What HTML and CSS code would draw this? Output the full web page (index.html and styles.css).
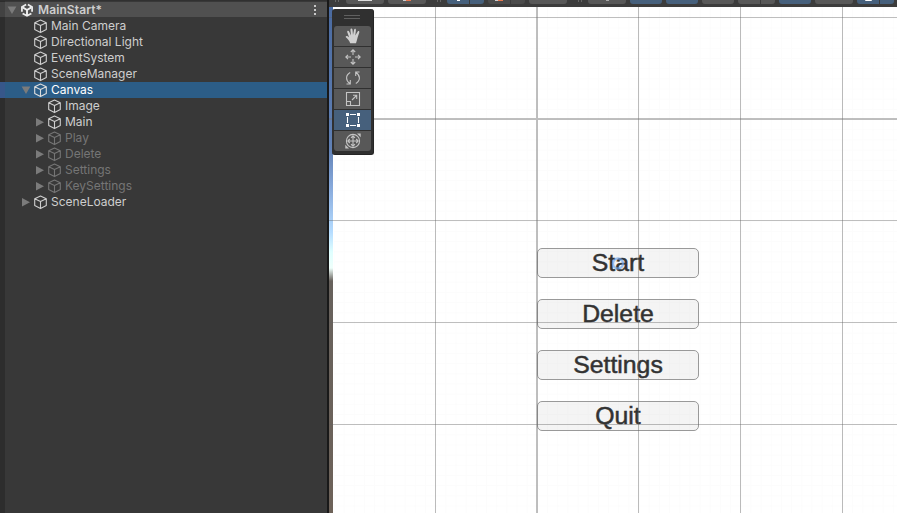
FILE: index.html
```
<!DOCTYPE html>
<html lang="en">
<head>
<meta charset="utf-8">
<title>Editor</title>
<link rel="stylesheet" href="styles.css">
</head>
<body>
<svg class="defs" width="0" height="0">
  <symbol id="cube" viewBox="0 0 16 16"><path d="M7.5 2 13.3 4.7V11.6L7.5 14.6 1.7 11.6V4.7ZM1.7 4.7 7.5 7.6 13.3 4.7M7.5 7.6V14.6" fill="none" stroke="currentColor" stroke-width="1.1" stroke-linejoin="round"/></symbol>
  <symbol id="down" viewBox="0 0 10 16"><path d="M.6 4.5H9.4L5 12Z" fill="currentColor"/></symbol>
  <symbol id="right" viewBox="0 0 10 16"><path d="M1 4V12.4L9 8.2Z" fill="currentColor"/></symbol>
</svg>
<div class="editor">
  <section class="hierarchy">
    <div class="row scene"><svg class="arrow"><use href="#down"/></svg><svg class="logo" viewBox="0 0 14 16"><path d="M6 1.6 1.2 4.5V10M8 1.6 12.8 4.5V10M2 12 7 14.7 12 12" fill="none" stroke="#eee" stroke-width="2"/><path d="M7 8V14M7 8 2 5M7 8 12 5" stroke="#eee" stroke-width="2.2"/></svg><b>MainStart*</b><span class="more"><i></i><i></i><i></i></span></div>
    <div class="row d1"><span class="arrow"></span><svg class="cube"><use href="#cube"/></svg>Main Camera</div>
    <div class="row d1"><span class="arrow"></span><svg class="cube"><use href="#cube"/></svg>Directional Light</div>
    <div class="row d1"><span class="arrow"></span><svg class="cube"><use href="#cube"/></svg>EventSystem</div>
    <div class="row d1"><span class="arrow"></span><svg class="cube"><use href="#cube"/></svg>SceneManager</div>
    <div class="row d1 selected"><svg class="arrow"><use href="#down"/></svg><svg class="cube"><use href="#cube"/></svg>Canvas</div>
    <div class="row d2"><span class="arrow"></span><svg class="cube"><use href="#cube"/></svg>Image</div>
    <div class="row d2"><svg class="arrow"><use href="#right"/></svg><svg class="cube"><use href="#cube"/></svg>Main</div>
    <div class="row d2 off"><svg class="arrow"><use href="#right"/></svg><svg class="cube"><use href="#cube"/></svg>Play</div>
    <div class="row d2 off"><svg class="arrow"><use href="#right"/></svg><svg class="cube"><use href="#cube"/></svg>Delete</div>
    <div class="row d2 off"><svg class="arrow"><use href="#right"/></svg><svg class="cube"><use href="#cube"/></svg>Settings</div>
    <div class="row d2 off"><svg class="arrow"><use href="#right"/></svg><svg class="cube"><use href="#cube"/></svg>KeySettings</div>
    <div class="row d1"><svg class="arrow"><use href="#right"/></svg><svg class="cube"><use href="#cube"/></svg>SceneLoader</div>
  </section>
  <section class="view">
    <div class="bar">
      <span class="grip"></span>
      <span class="chip"><em class="pale"></em></span><span class="chip"><em class="mark"></em></span>
      <span class="grip wide"></span>
      <span class="pair"><span class="chip on w22"><em class="dot"></em></span><span class="chip on w14"></span></span>
      <span class="pair"><span class="chip dim w22"><em class="mark"></em></span><span class="chip dim w14"></span></span>
      <span class="chip"></span>
      <span class="grip wide"></span>
      <span class="chip"><em class="dot grey"></em></span>
      <span class="chip on w32"></span><span class="chip on w32"></span><span class="chip w32"></span>
      <span class="pair"><span class="chip w22"></span><span class="chip w14"></span></span>
      <span class="chip on w32"></span><span class="chip"></span>
      <span class="pair"><span class="chip on w22"><em class="lens"></em></span><span class="chip on w14"></span></span>
    </div>
    <div class="stage">
      <div class="sky"></div>
      <div class="menu">
        <div class="button">Start</div>
        <div class="button">Delete</div>
        <div class="button">Settings</div>
        <div class="button">Quit</div>
      </div>
      <svg class="grid" viewBox="329 7 568 506" width="568" height="506">
        <defs><pattern id="minor" x="333.5" y="7.2" width="10.17" height="10.17" patternUnits="userSpaceOnUse"><path d="M0 .5H10.17M.5 0V10.17" stroke="#777" stroke-opacity=".025"/></pattern></defs>
        <path d="M334 7H897V513H334Z" fill="url(#minor)"/>
        <path d="M329 17.5H897M329 220.5H897M329 322.5H897M329 424.5H897" stroke="#606060" stroke-opacity=".4"/>
        <path d="M435.5 7V513M638.5 7V513M740.5 7V513M842.5 7V513" stroke="#606060" stroke-opacity=".42"/>
        <path d="M537 7V513M329 119H897" stroke="#707070" stroke-opacity=".45" stroke-width="2"/>
        <circle cx="618" cy="263.5" r="5" fill="none" stroke="#6ca3ee" stroke-opacity=".65" stroke-width="2.4"/>
      </svg>
      <div class="tools">
        <span class="handle"></span>
        <div class="tool hand"><svg viewBox="0 0 16 16"><path d="M5.2 15.2C4.4 12.8 2.9 11 .6 8.9 1 7.6 2.5 7.9 4.2 9.4L2.2 3.9C2.1 2.5 3.6 2.3 4.1 3.5L6 7.5 5.4 1.7C5.5.2 7.2.2 7.5 1.7L8 7 9.1 1.7C9.5.3 11.1.7 10.9 2.2L10.3 7.6 12.7 3.6C13.5 2.5 14.8 3.4 14.2 4.7L12.6 9.5C12 12 11.5 13.5 11 15.2Z"/></svg></div>
        <div class="tool"><svg viewBox="0 0 16 16"><path d="M8 1V6M8 10V15M1 8H6M10 8H15M5.8 3 8 .8 10.2 3M5.8 13 8 15.2 10.2 13M3 5.8.8 8 3 10.2M13 5.8 15.2 8 13 10.2"/></svg></div>
        <div class="tool"><svg viewBox="0 0 16 16"><path d="M5 13.5C.4 10.5.4 5.2 5.2 2.5M11 2.5C15.6 5.5 15.6 10.8 10.8 13.5M1.5 14H5.3V10M14.5 2H10.7V6"/></svg></div>
        <div class="tool"><svg viewBox="0 0 16 16"><path d="M1.5 1.5H14.5V14.5H1.5ZM1.5 10.5H5.5V14.5M7 9 11.5 4.5M8 4.3H11.7V8"/></svg></div>
        <div class="tool active"><svg viewBox="0 0 16 16"><path d="M5 2.5H11M5 13.5H11M2.5 5V11M13.5 5V11"/><path d="M1 1H4V4H1ZM12 1H15V4H12ZM1 12H4V15H1ZM12 12H15V15H12Z" fill="#fff" stroke="none"/></svg></div>
        <div class="tool"><svg viewBox="0 0 16 16"><circle cx="8" cy="8" r="6.6"/><path d="M8 3V13M3 8H13M6 4.8 8 2.8 10 4.8M6 11.2 8 13.2 10 11.2M4.8 6 2.8 8 4.8 10M11.2 6 13.2 8 11.2 10"/><path d="M12 .5H15.7V4.2ZM.3 11.8V15.5H4Z" fill="#c4c4c4" stroke="none"/></svg></div>
      </div>
    </div>
  </section>
</div>
</body>
</html>
```
FILE: styles.css
```
* { box-sizing: border-box; }
body { margin: 0; overflow: hidden; }
.defs { position: absolute; }
.editor { display: flex; width: 897px; height: 513px; background: #191919; font: 12px/16px Inter, sans-serif; }
.hierarchy { width: 327px; margin-right: 2px; padding-top: 2px; background: linear-gradient(#303030, #303030) 0 0 / 100% 1px no-repeat, linear-gradient(90deg, #2d2d2d 5px, #383838 5px); color: #cecece; }
.row { display: flex; align-items: center; height: 16px; white-space: nowrap; }
.row svg { display: block; flex: none; }
.scene { background: linear-gradient(90deg, #424242 5px, #505050 5px); padding-left: 7px; height: 15px; margin-bottom: 1px; }
.scene b { font-weight: 600; font-size: 12px; letter-spacing: .1px; margin-left: 4px; }
.arrow { width: 10px; height: 16px; color: #7b7b7b; flex: none; }
.logo { width: 14px; height: 14px; margin-left: 3px; }
.cube { width: 16px; height: 16px; margin: 0 2px 0 2px; }
.d1 { padding-left: 21px; }
.d2 { padding-left: 35px; }
.off { color: #757575; }
.selected { background: linear-gradient(90deg, #37578a 5px, #2c5d87 5px); color: #fff; }
.selected .cube { color: #ddd; }
.more { display: grid; gap: 2px; margin-left: auto; margin-right: 11px; }
.more i { width: 2px; height: 2px; background: #c8c8c8; }
.view { width: 568px; }
.bar { display: flex; align-items: flex-start; gap: 4px; height: 7px; background: #3c3c3c; overflow: hidden; }
.chip { display: flex; justify-content: center; flex: none; width: 38px; height: 4px; background: #585858; border-radius: 0 0 3px 3px; }
.pair { display: flex; flex: none; gap: 1px; }
.pair .w22 { border-bottom-right-radius: 0; }
.pair .w14 { border-bottom-left-radius: 0; }
.w22 { width: 22px; }
.w14 { width: 14px; }
.w32 { width: 32px; }
.on { background: #46607c; }
.dim { background: #4b4b4b; }
.grip { flex: none; width: 4px; height: 2px; margin: 0 3px 0 6px; border: solid #666; border-width: 0 1px; }
.wide { margin: 0 2px 0 7px; }
.chip em { display: block; height: 1px; }
.pale { width: 14px; background: #ddd; }
.mark { width: 8px; background: linear-gradient(90deg, #ccc 40%, #e87850 40%); }
.dot { width: 3px; background: #fff; }
.grey { background: #aaa; }
.lens { width: 7px; background: #fff; border-radius: 0 0 4px 4px; }
.stage { position: relative; height: 506px; padding: 241px 0 0 208px; background: #fff; }
.sky { position: absolute; left: 0; top: 0; width: 4px; height: 506px; background: linear-gradient(#4a6aa0, #6080b4 140px, #87a9db 180px, #b5dcff 225px, #dfffff 245px, #effffb 261px, #67615c 274px, #6d6259 100%); }
.menu { display: grid; gap: 21px; width: 162px; }
.button { height: 30px; border: 1px solid #999; border-radius: 5px; background: #f4f4f4; color: #323232; font: 24.8px/28px "Liberation Sans", sans-serif; text-align: center; -webkit-text-stroke: .5px #323232; }
.grid { position: absolute; left: 0; top: 0; }
.tools { position: absolute; left: 3px; top: 2px; width: 42px; height: 146px; padding: 6px 3px 4px 2px; background: #303030; border: solid #252525; border-width: 0 1px 1px 0; border-radius: 3px; }
.handle { display: block; width: 16px; height: 4px; margin: 0 auto 7px; border: solid #606060; border-width: 1px 0; }
.tool { display: flex; align-items: center; justify-content: center; width: 37px; height: 20px; margin-bottom: 1px; background: #585858; }
.hand { border-radius: 3px 3px 0 0; }
.tool:last-child { border-radius: 0 0 3px 3px; }
.tool svg { width: 16px; height: 16px; fill: none; stroke: #c4c4c4; stroke-width: 1.1; }
.hand svg { fill: #d0d0d0; stroke: none; }
.active { background: #46607c; }
.active svg { stroke: #fff; }
```
